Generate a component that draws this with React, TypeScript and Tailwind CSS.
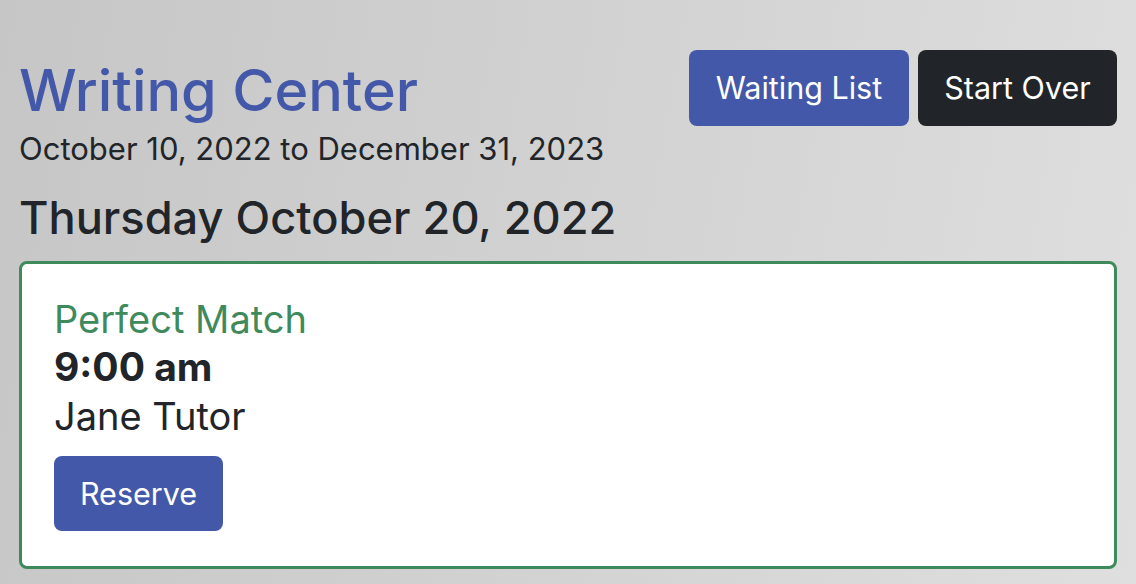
export default function App() {
  return (
    <div className="min-h-[584px] w-full bg-[linear-gradient(100deg,#c6c6c6_0%,#d2d2d2_50%,#dfdfdf_100%)] font-['Inter',sans-serif] text-[#212529]">
      <div className="px-[19px] pt-[50px]">
        <div className="flex items-start justify-between">
          <div>
            <h1 className="text-[57.6px] leading-[80px] font-medium text-[#4358a8]">Writing Center</h1>
            <div className="text-[31px] leading-[38px]">October 10, 2022 to December 31, 2023</div>
          </div>
          <div className="flex gap-[9px]">
            <button className="h-[76px] w-[220px] rounded-[8px] bg-[#4358a8] text-[30.5px] text-white">Waiting List</button>
            <button className="h-[76px] w-[199px] rounded-[8px] bg-[#212529] text-[30.5px] text-white">Start Over</button>
          </div>
        </div>
        <h3 className="mt-[23px] text-[45.2px] leading-[54px] font-medium">Thursday October 20, 2022</h3>
        <div className="mt-[16px] rounded-[8px] border-[3px] border-[#3f8a5c] bg-white px-[32px] pt-[31px] pb-[35px]">
          <div className="text-[38px] leading-[48px] text-[#3f8a5c]">Perfect Match</div>
          <div className="text-[39px] leading-[48px] font-bold">9:00 am</div>
          <div className="text-[38px] leading-[50px]">Jane Tutor</div>
          <button className="mt-[15px] h-[75px] w-[169px] rounded-[8px] bg-[#4358a8] text-[30.5px] text-white">Reserve</button>
        </div>
      </div>
    </div>
  );
}
